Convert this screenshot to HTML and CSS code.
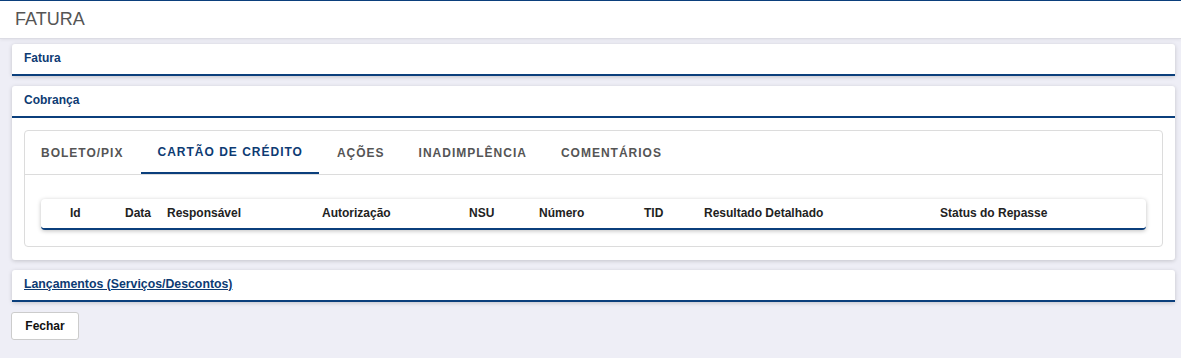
FILE: index.html
```html
<!DOCTYPE html>
<html lang="pt-BR">
<head>
  <meta charset="UTF-8">
  <title>Fatura</title>
  <link rel="stylesheet" href="styles.css">
</head>
<body>

<!-- Titulo -->
<div class="page-title">FATURA</div>

<div class="content">

  <div class="panel">
    <div class="panel-header">Fatura</div>
  </div>

  <div class="panel">
    <div class="panel-header">Cobrança</div>
    <div class="panel-body">
      <div class="tab-card">
        <div class="tabs">
          <div class="tab">Boleto/Pix</div>
          <div class="tab active">Cartão de Crédito</div>
          <div class="tab">Ações</div>
          <div class="tab">Inadimplência</div>
          <div class="tab">Comentários</div>
        </div>
        <div class="tab-content">
          <div class="grid-header">
            <div class="col">Id</div>
            <div class="col">Data</div>
            <div class="col">Responsável</div>
            <div class="col">Autorização</div>
            <div class="col">NSU</div>
            <div class="col">Número</div>
            <div class="col">TID</div>
            <div class="col">Resultado Detalhado</div>
            <div class="col">Status do Repasse</div>
          </div>
        </div>
      </div>
    </div>
  </div>

  <div class="panel">
    <div class="panel-header"><a class="panel-link" href="#">Lançamentos (Serviços/Descontos)</a></div>
  </div>

  <button class="btn">Fechar</button>
</div>

</body>
</html>
```

FILE: styles.css
```css
body {
  margin: 0;
  padding: 0;
  font-family: "Liberation Sans", Arial, sans-serif;
  background: #eeeef6;
  border-top: 1px solid #0b3f7c;
}
.page-title {
  background: white;
  height: 37px;
  line-height: 37px;
  padding-left: 15px;
  font-size: 18px;
  color: #555;
  border-bottom: 1px solid #dcdce4;
  box-shadow: 0 1px 3px rgba(0,0,0,0.06);
}
.content {
  padding: 5px 6px 0 12px;
}
.panel {
  background: white;
  border-radius: 3px;
  margin-bottom: 10px;
  box-shadow: 0 1px 4px rgba(0,0,0,0.18);
}
.panel-header {
  height: 30px;
  line-height: 28px;
  padding-left: 12px;
  font-size: 12px;
  font-weight: bold;
  color: #0d3b73;
  border-bottom: 2px solid #0b3f7c;
}
.panel-link {
  color: #0d3b73;
  font-size: 12.3px;
  text-decoration: underline;
}
.panel-body {
  padding: 12px 12px 13px;
}
.tab-card {
  border: 1px solid #dcdcdc;
  border-radius: 4px;
}
.tabs {
  display: flex;
  gap: 2px;
  height: 43px;
  border-bottom: 1px solid #dcdcdc;
}
.tab {
  padding: 0 16px;
  line-height: 44px;
  font-size: 12px;
  font-weight: bold;
  letter-spacing: 1px;
  text-transform: uppercase;
  color: #555;
}
.tab.active {
  color: #0d3b73;
  border-bottom: 2px solid #0b3f7c;
  line-height: 42px;
}
.tab-content {
  padding: 24px 16px 16px;
}
.grid-header {
  display: grid;
  grid-template-columns: 55px 42px 155px 147px 70px 105px 60px 236px 1fr;
  padding-left: 29px;
  height: 29px;
  line-height: 29px;
  background: white;
  border-radius: 4px;
  border-bottom: 2px solid #0b3f7c;
  box-shadow: 0 1px 4px rgba(0,0,0,0.25);
  font-size: 12px;
  font-weight: bold;
  color: #222;
}
.btn {
  margin-left: -1px;
  width: 68px;
  height: 28px;
  background: white;
  border: 1px solid #ccc;
  border-radius: 3px;
  font-family: "Liberation Sans", Arial, sans-serif;
  font-size: 12px;
  font-weight: bold;
  color: #111;
  cursor: pointer;
}
```
